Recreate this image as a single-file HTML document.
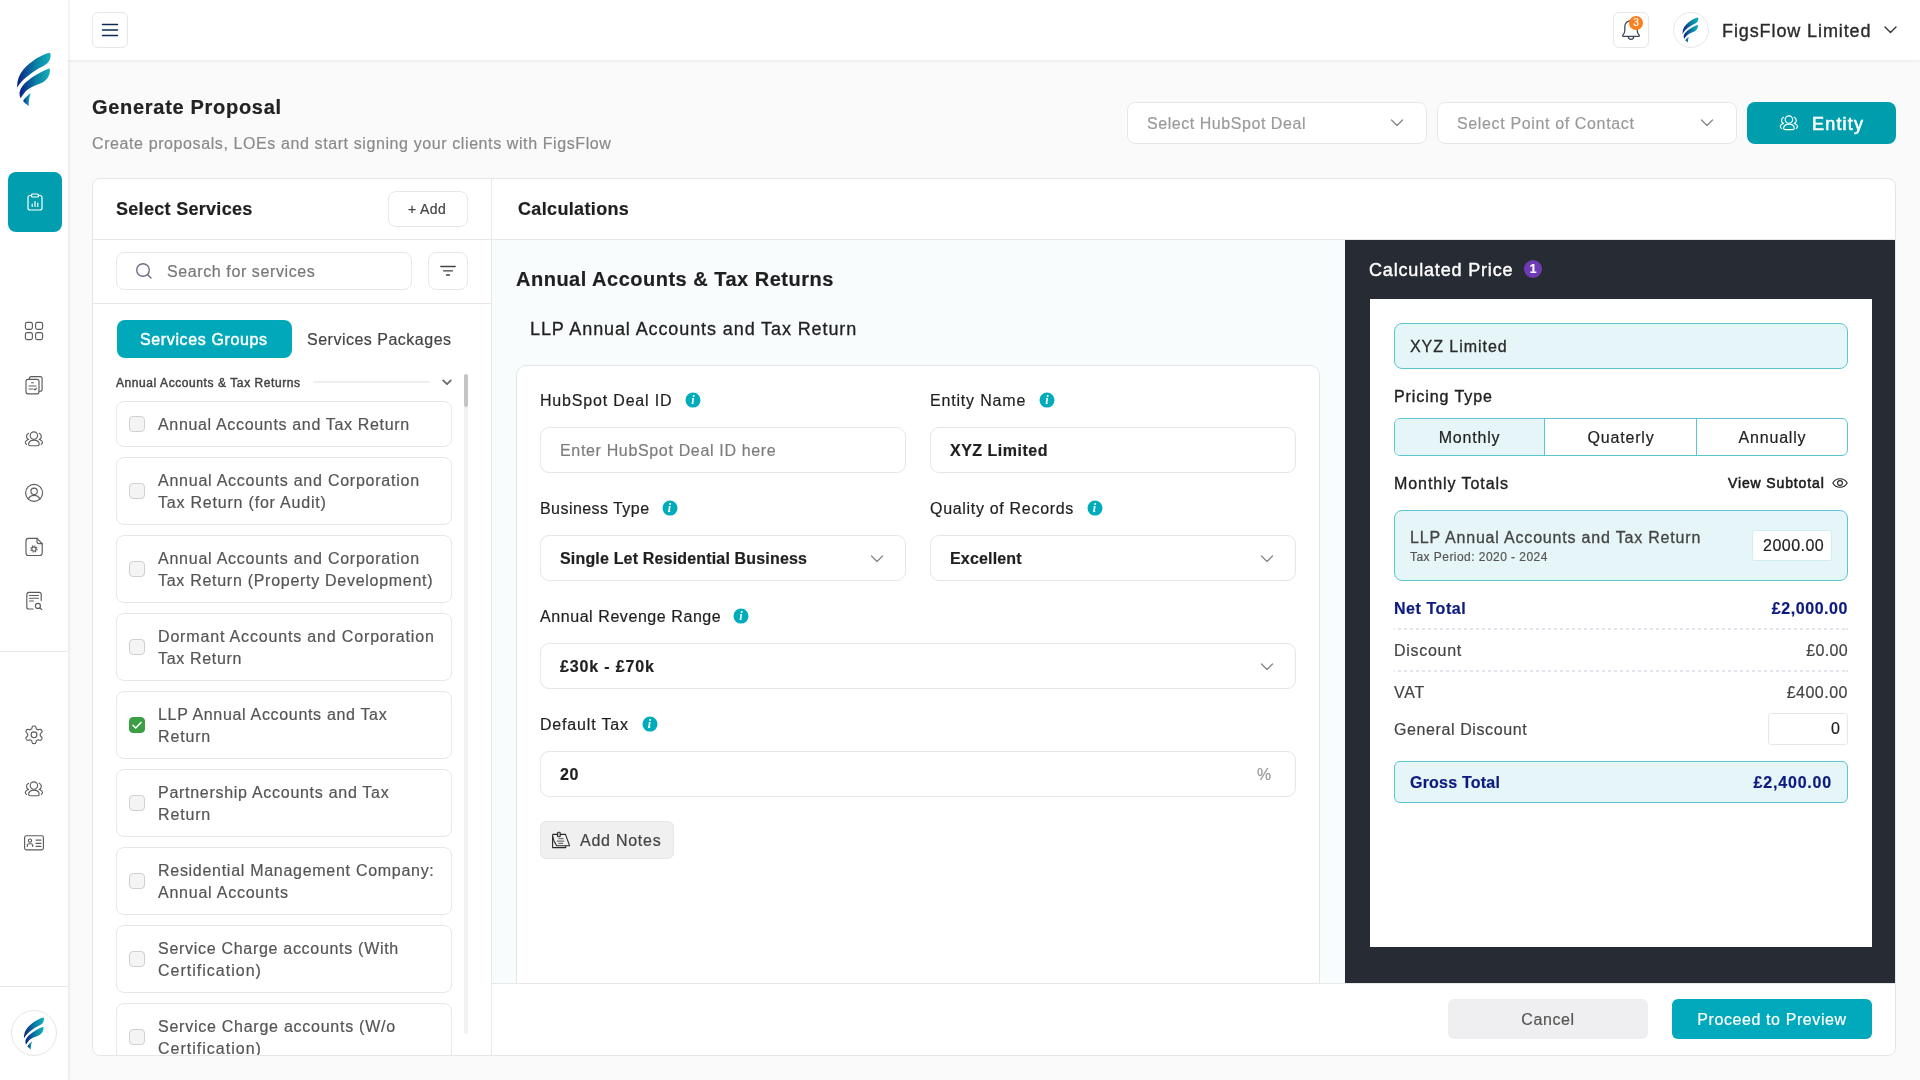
<!DOCTYPE html>
<html lang="en">
<head>
<meta charset="utf-8">
<title>Generate Proposal</title>
<style>
*{box-sizing:border-box;margin:0;padding:0}
html,body{width:1920px;height:1080px;overflow:hidden}
body{font-family:"Liberation Sans",sans-serif;font-size:16px;color:#222;background:#fafafa;position:relative;letter-spacing:.6px;-webkit-text-stroke:.2px}
.abs{position:absolute}
.t{position:absolute;white-space:nowrap;line-height:20px;margin-top:1px}
svg{display:block}
/* sidebar */
#side{position:absolute;left:0;top:0;width:68px;height:1080px;background:#fff;box-shadow:1px 0 3px rgba(0,0,0,.09);z-index:5}
.ico{position:absolute;left:22px;width:24px;height:24px}
.ico svg{width:24px;height:24px;fill:none;stroke:#5c5c5c;stroke-width:1.15;stroke-linecap:round;stroke-linejoin:round}
.sdiv{position:absolute;left:0;width:68px;height:1px;background:#e8e8e8}
/* topbar */
#top{position:absolute;left:68px;top:0;width:1852px;height:60px;background:#fff;box-shadow:0 1px 3px rgba(0,0,0,.08);z-index:4}
.sqbtn{position:absolute;width:36px;height:36px;border:1px solid #e7e7e8;border-radius:6px;background:#fff}
/* inputs */
.inp{position:absolute;border:1px solid #e7e7e8;border-radius:8px;background:#fff}
.chev{position:absolute;width:14px;height:8px}
.chev svg{width:14px;height:8px;fill:none;stroke:#8a8a8a;stroke-width:1.4;stroke-linecap:round;stroke-linejoin:round}
.info{position:absolute;width:15px;height:15px;border-radius:50%;background:#00abbb;transform:translate(.5px,-.4px);-webkit-text-stroke:0;color:#fff;font-family:"Liberation Serif",serif;font-style:italic;font-weight:700;font-size:12px;line-height:15px;text-align:center;letter-spacing:0}
/* card */
#card{position:absolute;left:92px;top:178px;width:1804px;height:878px;background:#fff;border:1px solid #e6e6e6;border-radius:8px;overflow:hidden}
.svc{position:absolute;left:116px;width:336px;border:1px solid #e7e7e8;border-radius:8px;background:#fff}
.svc .cb{position:absolute;left:12px;top:50%;margin-top:-8px;width:16px;height:16px;border:1px solid #d0d0d0;border-radius:4px;background:#f4f4f5}
.svc .lb{position:absolute;left:41px;top:50%;color:#555;line-height:22px;white-space:nowrap;letter-spacing:.75px;padding-top:1px}
#clip{position:absolute;left:0;top:0;width:1895px;height:1055px;overflow:hidden}
#clip,#top,#side,#hdr{will-change:transform}
.svc .cb.on{background:#3c9f46;border-color:#3c9f46}
.svc .cb svg{position:absolute;left:-1px;top:-1px;width:16px;height:16px;fill:none;stroke:#fff;stroke-width:1.500;stroke-linecap:round;stroke-linejoin:round}
.lab{color:#1f1f1f;letter-spacing:.82px}
.val{color:#1f1f1f;font-weight:700;letter-spacing:.17px}
.inp.f{border-radius:9px}
.tbox{position:absolute;background:#e6f6f8;border:1px solid #5cc5d2;border-radius:8px}
.med{color:#222;letter-spacing:.92px;-webkit-text-stroke:.35px #222}
.seg{text-align:center;color:#222;letter-spacing:.8px}
.navy{color:#0d1b7e;font-weight:700;letter-spacing:.55px}
.row{color:#444;letter-spacing:.72px}
.r{right:47px}
.dot{position:absolute;left:1394px;width:454px;height:2px;background:repeating-linear-gradient(90deg,#e3e5ec 0,#e3e5ec 3px,transparent 3px,transparent 6px);background-position:-2px 0}
</style>
</head>
<body>

<!-- SIDEBAR -->
<div id="side">
<svg style="position:absolute;left:0;top:0;width:0;height:0">
<defs>
<linearGradient id="lg" x1="0" y1="0" x2="1" y2="0"><stop offset="0" stop-color="#0a1f86"/><stop offset=".55" stop-color="#0a7fa3"/><stop offset="1" stop-color="#12b0bd"/></linearGradient>
<symbol id="logo" viewBox="16 52 36 55">
<path fill="url(#lg)" d="M49.9 52.8C50.8 54.5 50.8 56.4 50.2 58.2C49.3 61.2 47.6 63.6 45 65.1C41.2 67.4 36.6 69.4 32.7 72.2C26.5 76.6 20.5 81.6 17.1 87.8C17.1 84.2 17.5 80.6 18.8 77.2C21 71.6 24.8 67.4 29.5 63.6C33.2 60.6 37 57.8 41.1 56C44 54.6 46.8 53.4 49.9 52.8Z"/>
<path fill="url(#lg)" d="M49.6 68.3C50.2 70.8 49.9 73.4 48.9 75.5C47.6 78.6 45.3 81 42.4 82.6C38.9 84.5 34.9 85.4 31.4 87.2C28.6 88.6 26 90.6 24.3 93C23 94.6 21.7 96.4 20.7 98.2C19.7 96.2 19.3 93.9 19.7 91.7C20.5 87.8 23.2 84.7 26.2 82C29.5 79 33.3 76.4 37.2 74.2C41.1 71.9 45.3 69.9 49.6 68.3Z"/>
<path fill="url(#lg)" d="M30.8 93C29.2 97.3 28.4 101.7 28.8 106C26.7 104.6 24.7 103 23 101.1C25 98 27.7 95.1 30.8 93Z"/>
</symbol>
</defs>
</svg>
<svg class="abs" style="left:16px;top:52px;width:36px;height:55px"><use href="#logo"/></svg>
<div class="abs" style="left:8px;top:172px;width:54px;height:60px;border-radius:8px;background:#009eae"></div>
<svg class="abs" style="left:25px;top:192px;width:20px;height:20px;fill:none;stroke:#fff;stroke-width:1.2;stroke-linecap:round;stroke-linejoin:round" viewBox="0 0 20 20"><path d="M6.5 3.5H5a2 2 0 0 0-2 2V16a2 2 0 0 0 2 2h10a2 2 0 0 0 2-2V5.500a2 2 0 0 0-2-2h-1.500"/><rect x="6.500" y="2" width="7" height="3" rx="1"/><path d="M7.200 14.500V12M10 14.500V9.500M12.800 14.500V11"/></svg>

<div class="ico" style="top:319px"><svg viewBox="0 0 24 24"><rect x="3.400" y="3.400" width="7" height="7" rx="1.800"/><rect x="13.600" y="3.400" width="7" height="7" rx="1.800"/><rect x="3.400" y="13.600" width="7" height="7" rx="1.800"/><rect x="13.600" y="13.600" width="7" height="7" rx="1.800"/></svg></div>
<div class="ico" style="top:373px"><svg viewBox="0 0 24 24"><path d="M7.300 6.300V5.600a2 2 0 0 1 2-2h8.800a2 2 0 0 1 2 2v10.600a2 2 0 0 1-2 2H17"/><rect x="4" y="6.300" width="13" height="14.500" rx="2"/><path d="M9.500 9.700h2M7 13h7M7 16h3.500M12 16l.900.900 1.700-1.700"/></svg></div>
<div class="ico" style="top:427px"><svg viewBox="0 0 24 24"><circle cx="11.900" cy="8.550" r="3.700"/><path d="M6.600 17.300c0-2.700 2.200-4.200 5.300-4.200s5.300 1.500 5.300 4.200c0 .900-.600 1.400-1.500 1.400H8.100c-.900 0-1.500-.500-1.500-1.400Z"/><path d="M6.600 6.300C5.200 7 4.500 8.100 4.500 9.400s.700 2.400 2.100 3.100M5.800 12.800C4.200 13.500 3.300 14.500 3.300 15.600c0 .800.400 1.400 1.200 1.800M17.200 6.300c1.400.700 2.100 1.800 2.100 3.100s-.700 2.400-2.100 3.100M18 12.800c1.600.700 2.500 1.700 2.500 2.800 0 .800-.400 1.400-1.200 1.800"/></svg></div>
<div class="ico" style="top:481px"><svg viewBox="0 0 24 24"><circle cx="12.100" cy="11.800" r="8.500"/><circle cx="12.100" cy="10.300" r="3.200"/><path d="M6.300 18c1-2.300 3.200-3.700 5.800-3.700s4.800 1.400 5.800 3.700"/></svg></div>
<div class="ico" style="top:535px"><svg viewBox="0 0 24 24"><path d="M15 3.400H6.500A2.500 2.500 0 0 0 4 5.900V18a2.500 2.500 0 0 0 2.500 2.500h11.200a2.500 2.500 0 0 0 2.500-2.500V8.600Z"/><path d="M15 3.400v3.200a2 2 0 0 0 2 2h3.200"/><circle cx="11.900" cy="13.900" r="2.100"/><circle cx="11.900" cy="13.900" r="3.100" stroke-width="1.300" stroke-dasharray="1.100 1.335" stroke-linecap="butt"/></svg></div>
<div class="ico" style="top:589px"><svg viewBox="0 0 24 24"><path d="M19.200 11.500V5.400a2 2 0 0 0-2-2H6.800a2 2 0 0 0-2 2V18a2 2 0 0 0 2 2H11"/><path d="M7.500 6.500h9M7.500 9.200h9M7.500 12h4"/><circle cx="15.900" cy="16.900" r="2.500"/><path d="M17.800 18.800l2 1.800"/></svg></div>
<div class="sdiv" style="top:651px"></div>
<div class="ico" style="top:723px"><svg viewBox="0 0 24 24"><circle cx="12" cy="11.800" r="2.900"/><path d="M12.00 3.00 L12.46 3.01 L12.92 3.05 L13.36 3.18 L13.70 3.81 L13.95 4.51 L14.14 5.21 L14.28 5.85 L14.56 6.04 L14.86 6.19 L15.15 6.34 L15.43 6.52 L15.70 6.70 L16.01 6.85 L16.64 6.65 L17.34 6.46 L18.07 6.33 L18.78 6.31 L19.12 6.63 L19.38 7.01 L19.62 7.40 L19.84 7.80 L20.04 8.22 L20.15 8.67 L19.77 9.28 L19.29 9.85 L18.78 10.36 L18.30 10.80 L18.27 11.14 L18.29 11.47 L18.30 11.80 L18.29 12.13 L18.27 12.46 L18.30 12.80 L18.78 13.24 L19.29 13.75 L19.77 14.32 L20.15 14.93 L20.04 15.38 L19.84 15.80 L19.62 16.20 L19.38 16.59 L19.12 16.97 L18.78 17.29 L18.07 17.27 L17.34 17.14 L16.64 16.95 L16.01 16.75 L15.70 16.90 L15.43 17.08 L15.15 17.26 L14.86 17.41 L14.56 17.56 L14.28 17.75 L14.14 18.39 L13.95 19.09 L13.70 19.79 L13.36 20.42 L12.92 20.55 L12.46 20.59 L12.00 20.60 L11.54 20.59 L11.08 20.55 L10.64 20.42 L10.30 19.79 L10.05 19.09 L9.86 18.39 L9.72 17.75 L9.44 17.56 L9.14 17.41 L8.85 17.26 L8.57 17.08 L8.30 16.90 L7.99 16.75 L7.36 16.95 L6.66 17.14 L5.93 17.27 L5.22 17.29 L4.88 16.97 L4.62 16.59 L4.38 16.20 L4.16 15.80 L3.96 15.38 L3.85 14.93 L4.23 14.32 L4.71 13.75 L5.22 13.24 L5.70 12.80 L5.73 12.46 L5.71 12.13 L5.70 11.80 L5.71 11.47 L5.73 11.14 L5.70 10.80 L5.22 10.36 L4.71 9.85 L4.23 9.28 L3.85 8.67 L3.96 8.22 L4.16 7.80 L4.38 7.40 L4.62 7.01 L4.88 6.63 L5.22 6.31 L5.93 6.33 L6.66 6.46 L7.36 6.65 L7.99 6.85 L8.30 6.70 L8.57 6.52 L8.85 6.34 L9.14 6.19 L9.44 6.04 L9.72 5.85 L9.86 5.21 L10.05 4.51 L10.30 3.81 L10.64 3.18 L11.08 3.05 L11.54 3.01Z"/></svg></div>
<div class="ico" style="top:777px"><svg viewBox="0 0 24 24"><circle cx="11.900" cy="8.550" r="3.700"/><path d="M6.600 17.300c0-2.700 2.200-4.200 5.300-4.200s5.300 1.500 5.300 4.200c0 .900-.600 1.400-1.500 1.400H8.100c-.900 0-1.500-.500-1.500-1.400Z"/><path d="M6.600 6.300C5.200 7 4.500 8.100 4.500 9.400s.700 2.400 2.100 3.100M5.800 12.800C4.200 13.500 3.300 14.500 3.300 15.600c0 .800.400 1.400 1.200 1.800M17.200 6.300c1.400.700 2.100 1.800 2.100 3.100s-.700 2.400-2.100 3.100M18 12.800c1.600.700 2.500 1.700 2.500 2.800 0 .800-.400 1.400-1.200 1.800"/></svg></div>
<div class="ico" style="top:831px"><svg viewBox="0 0 24 24"><rect x="2.600" y="4.700" width="18.800" height="14.200" rx="1.800"/><circle cx="8" cy="9.600" r="1.600"/><path d="M5.300 15.400v-.700a2 2 0 0 1 2-2h1.400a2 2 0 0 1 2 2v.700M14 9.100h5M14 12.400h5M14 15.300h5"/></svg></div>
<div class="sdiv" style="top:986px"></div>
<div class="abs" style="left:11px;top:1010px;width:46px;height:46px;border-radius:50%;border:1px solid #e6e6e6;background:#fff"></div>
<svg class="abs" style="left:23px;top:1017px;width:22px;height:33px"><use href="#logo"/></svg>
</div>

<!-- TOPBAR -->
<div id="top">
<div class="sqbtn" style="left:24px;top:12px"></div>
<svg class="abs" style="left:33px;top:21px;width:18px;height:18px;fill:none;stroke:#0b2a55;stroke-width:1.5;stroke-linecap:round" viewBox="0 0 18 18"><path d="M1.500 3.500h15M1.500 9h15M1.500 14.500h15"/></svg>
<div class="sqbtn" style="left:1545px;top:12px"></div>
<svg class="abs" style="left:1552px;top:19px;width:22px;height:24px;fill:none;stroke:#3d4556;stroke-width:1.25;stroke-linecap:round;stroke-linejoin:round" viewBox="0 0 22 24"><path d="M3.3 17.3c-.7 0-.9-.8-.4-1.3 1.400-1.300 1.900-2.400 1.900-4.400V7.7a6.2 6.2 0 0 1 12.4 0v3.9c0 2 .5 3.1 1.900 4.400.5.5.3 1.300-.4 1.300Z"/><path d="M8.2 17.6c.3 1.800 1.400 2.700 2.800 2.700s2.500-.9 2.800-2.700"/></svg>
<div class="abs" style="left:1561px;top:16px;width:14px;height:14px;border-radius:50%;background:#ff7e1e;color:#fff;font-size:10px;line-height:14px;text-align:center;letter-spacing:0">3</div>
<div class="abs" style="left:1605px;top:12px;width:36px;height:36px;border-radius:50%;border:1px solid #e7e7e8;background:#fff"></div>
<svg class="abs" style="left:1614px;top:17px;width:17px;height:26px"><use href="#logo"/></svg>
<div class="t" style="left:1654px;top:18px;font-size:18px;line-height:24px;color:#2b2b2b;letter-spacing:.9px;-webkit-text-stroke:.35px #2b2b2b">FigsFlow Limited</div>
<svg class="abs" style="left:1816px;top:26px;width:13px;height:8px;fill:none;stroke:#333;stroke-width:1.4;stroke-linecap:round;stroke-linejoin:round" viewBox="0 0 13 8"><path d="M1 1l5.500 5.500L12 1"/></svg>
</div>

<!-- PAGE HEADER -->
<div id="hdr">
<div class="t" style="left:92px;top:94px;font-size:20px;font-weight:700;line-height:24px;color:#222;letter-spacing:.7px">Generate Proposal</div>
<div class="t" style="left:92px;top:133px;color:#8a8a8a;letter-spacing:.6px">Create proposals, LOEs and start signing your clients with FigsFlow</div>
<div class="inp" style="left:1127px;top:102px;width:300px;height:42px"></div>
<div class="t" style="left:1147px;top:113px;color:#9a9a9a;letter-spacing:.55px">Select HubSpot Deal</div>
<div class="chev" style="left:1390px;top:119px"><svg viewBox="0 0 14 8"><path d="M1.500 1l5.500 5.500L12.500 1"/></svg></div>
<div class="inp" style="left:1437px;top:102px;width:300px;height:42px"></div>
<div class="t" style="left:1457px;top:113px;color:#9a9a9a;letter-spacing:.64px">Select Point of Contact</div>
<div class="chev" style="left:1700px;top:119px"><svg viewBox="0 0 14 8"><path d="M1.500 1l5.500 5.500L12.500 1"/></svg></div>
<div class="abs" style="left:1747px;top:102px;width:149px;height:42px;border-radius:8px;background:#009eac"></div>
<svg class="abs" style="left:1777px;top:111px;width:24px;height:24px;fill:none;stroke:#fff;stroke-width:1.15;stroke-linecap:round;stroke-linejoin:round" viewBox="0 0 24 24"><circle cx="11.900" cy="8.550" r="3.700"/><path d="M6.600 17.300c0-2.700 2.200-4.200 5.300-4.200s5.300 1.500 5.300 4.200c0 .900-.600 1.400-1.500 1.400H8.100c-.900 0-1.500-.500-1.500-1.400Z"/><path d="M6.600 6.300C5.200 7 4.500 8.100 4.500 9.400s.700 2.400 2.100 3.100M5.800 12.800C4.200 13.500 3.300 14.500 3.300 15.600c0 .800.400 1.400 1.200 1.800M17.200 6.300c1.400.700 2.100 1.800 2.100 3.100s-.700 2.400-2.100 3.100M18 12.800c1.600.700 2.500 1.700 2.500 2.800 0 .800-.400 1.400-1.200 1.800"/></svg>
<div class="t" style="left:1812px;top:111px;font-size:18px;line-height:24px;color:#fff;letter-spacing:1.2px;-webkit-text-stroke:.55px #fff">Entity</div>
</div>

<!-- CARD -->
<div id="card"></div>
<div id="clip">
<!-- left panel -->
<div class="abs" style="left:491px;top:179px;width:1px;height:876px;background:#e8e8e8"></div>
<div class="abs" style="left:93px;top:239px;width:1802px;height:1px;background:#e8e8e8"></div>
<div class="abs" style="left:93px;top:303px;width:398px;height:1px;background:#e8e8e8"></div>
<div class="t" style="left:116px;top:196px;font-size:18px;font-weight:700;line-height:24px;color:#1f1f1f;letter-spacing:.3px">Select Services</div>
<div class="inp" style="left:388px;top:191px;width:80px;height:36px"></div>
<div class="t" style="left:408px;top:198px;font-size:14px;color:#444;letter-spacing:.4px">+ Add</div>
<div class="inp" style="left:116px;top:252px;width:296px;height:38px"></div>
<svg class="abs" style="left:135px;top:262px;width:18px;height:18px;fill:none;stroke:#6b7085;stroke-width:1.4;stroke-linecap:round" viewBox="0 0 18 18"><circle cx="8" cy="8" r="6.300"/><path d="M12.700 12.700l3.300 3.300"/></svg>
<div class="t" style="left:167px;top:261px;color:#777;letter-spacing:.6px">Search for services</div>
<div class="inp" style="left:428px;top:252px;width:40px;height:38px"></div>
<svg class="abs" style="left:440px;top:265px;width:16px;height:12px;fill:none;stroke:#444;stroke-width:1.300;stroke-linecap:round" viewBox="0 0 16 12"><path d="M.800 1.500h14.400M3.500 5.800h9M6.500 10h3"/></svg>
<div class="abs" style="left:117px;top:320px;width:175px;height:38px;border-radius:8px;background:#00a8ba"></div>
<div class="t" style="left:140px;top:329px;color:#fff;letter-spacing:.62px;-webkit-text-stroke:.45px #fff">Services Groups</div>
<div class="t" style="left:307px;top:329px;color:#444;letter-spacing:.5px">Services Packages</div>
<div class="t" style="left:116px;top:372px;font-size:12px;color:#444;letter-spacing:.58px;-webkit-text-stroke:.45px #444">Annual Accounts &amp; Tax Returns</div>
<div class="abs" style="left:313px;top:381px;width:117px;height:2px;background:#efefef"></div>
<svg class="abs" style="left:442px;top:379px;width:10px;height:7px;fill:none;stroke:#6a6a6a;stroke-width:1.8;stroke-linecap:round;stroke-linejoin:round" viewBox="0 0 10 7"><path d="M1.2 1.4l3.8 3.8 3.8-3.800"/></svg>
<div class="abs" style="left:464px;top:374px;width:4px;height:660px;background:#f1f1f1;border-radius:2px"></div>
<div class="abs" style="left:464px;top:374px;width:4px;height:33px;background:#c4c4c4;border-radius:2px"></div>
<div class="svc" style="top:401px;height:46px"><div class="cb"></div><div class="lb" style="margin-top:-11px"><span style="letter-spacing:0.665px">Annual Accounts and Tax Return</span></div></div>
<div class="svc" style="top:457px;height:68px"><div class="cb"></div><div class="lb" style="margin-top:-22px"><span style="letter-spacing:0.755px">Annual Accounts and Corporation</span><br><span style="letter-spacing:0.795px">Tax Return (for Audit)</span></div></div>
<div class="svc" style="top:535px;height:68px"><div class="cb"></div><div class="lb" style="margin-top:-22px"><span style="letter-spacing:0.755px">Annual Accounts and Corporation</span><br><span style="letter-spacing:0.715px">Tax Return (Property Development)</span></div></div>
<div class="svc" style="top:613px;height:68px"><div class="cb"></div><div class="lb" style="margin-top:-22px"><span style="letter-spacing:0.835px">Dormant Accounts and Corporation</span><br><span style="letter-spacing:0.675px">Tax Return</span></div></div>
<div class="svc" style="top:691px;height:68px"><div class="cb on"><svg viewBox="0 0 16 16"><path d="M4 8.300l2.700 2.700L12 5.500"/></svg></div><div class="lb" style="margin-top:-22px"><span style="letter-spacing:0.675px">LLP Annual Accounts and Tax</span><br><span style="letter-spacing:0.845px">Return</span></div></div>
<div class="svc" style="top:769px;height:68px"><div class="cb"></div><div class="lb" style="margin-top:-22px"><span style="letter-spacing:0.715px">Partnership Accounts and Tax</span><br><span style="letter-spacing:0.845px">Return</span></div></div>
<div class="svc" style="top:847px;height:68px"><div class="cb"></div><div class="lb" style="margin-top:-22px"><span style="letter-spacing:0.715px">Residential Management Company:</span><br><span style="letter-spacing:0.765px">Annual Accounts</span></div></div>
<div class="svc" style="top:925px;height:68px"><div class="cb"></div><div class="lb" style="margin-top:-22px"><span style="letter-spacing:0.705px">Service Charge accounts (With</span><br><span style="letter-spacing:1.005px">Certification)</span></div></div>
<div class="svc" style="top:1003px;height:68px"><div class="cb"></div><div class="lb" style="margin-top:-22px"><span style="letter-spacing:0.745px">Service Charge accounts (W/o</span><br><span style="letter-spacing:1.005px">Certification)</span></div></div>

<!-- /left panel -->
<!-- middle panel -->
<div class="abs" style="left:492px;top:240px;width:853px;height:743px;background:#f8fcfd"></div>
<div class="t" style="left:518px;top:196px;font-size:18px;font-weight:700;line-height:24px;color:#1f1f1f;letter-spacing:.35px">Calculations</div>
<div class="t" style="left:516px;top:265px;font-size:20px;font-weight:700;line-height:26px;color:#1f1f1f;letter-spacing:.5px">Annual Accounts &amp; Tax Returns</div>
<div class="t" style="left:530px;top:316px;font-size:18px;line-height:24px;color:#222;letter-spacing:.9px;-webkit-text-stroke:.3px #222">LLP Annual Accounts and Tax Return</div>
<div class="abs" style="left:516px;top:365px;width:804px;height:640px;background:#fff;border:1px solid #e6e6e6;border-radius:10px"></div>

<div class="t lab" style="left:540px;top:390px">HubSpot Deal ID</div><div class="info" style="left:685.0px;top:393.0px">i</div>
<div class="inp f" style="left:540px;top:427px;width:366px;height:46px"></div>
<div class="t" style="left:560px;top:440px;color:#7d7d7d;letter-spacing:.66px">Enter HubSpot Deal ID here</div>
<div class="t lab" style="left:930px;top:390px">Entity Name</div><div class="info" style="left:1039.0px;top:393.0px">i</div>
<div class="inp f" style="left:930px;top:427px;width:366px;height:46px"></div>
<div class="t val" style="left:950px;top:440px;letter-spacing:.5px">XYZ Limited</div>

<div class="t lab" style="left:540px;top:498px;letter-spacing:.44px">Business Type</div><div class="info" style="left:661.5px;top:501.0px">i</div>
<div class="inp f" style="left:540px;top:535px;width:366px;height:46px"></div>
<div class="t val" style="left:560px;top:548px">Single Let Residential Business</div><div class="chev" style="left:870px;top:555px"><svg viewBox="0 0 14 8"><path d="M1.500 1l5.500 5.500L12.500 1"/></svg></div>
<div class="t lab" style="left:930px;top:498px;letter-spacing:.69px">Quality of Records</div><div class="info" style="left:1086.5px;top:501.0px">i</div>
<div class="inp f" style="left:930px;top:535px;width:366px;height:46px"></div>
<div class="t val" style="left:950px;top:548px">Excellent</div><div class="chev" style="left:1260px;top:555px"><svg viewBox="0 0 14 8"><path d="M1.500 1l5.500 5.500L12.500 1"/></svg></div>

<div class="t lab" style="left:540px;top:606px;letter-spacing:.57px">Annual Revenge Range</div><div class="info" style="left:733.0px;top:609.0px">i</div>
<div class="inp f" style="left:540px;top:643px;width:756px;height:46px"></div>
<div class="t val" style="left:560px;top:656px;letter-spacing:.84px">£30k - £70k</div><div class="chev" style="left:1260px;top:663px"><svg viewBox="0 0 14 8"><path d="M1.500 1l5.500 5.500L12.500 1"/></svg></div>

<div class="t lab" style="left:540px;top:714px">Default Tax</div><div class="info" style="left:641.5px;top:717.0px">i</div>
<div class="inp f" style="left:540px;top:751px;width:756px;height:46px"></div>
<div class="t val" style="left:560px;top:764px;letter-spacing:.7px">20</div>
<div class="t" style="left:1257px;top:764px;color:#9a9a9a;letter-spacing:0">%</div>

<div class="abs" style="left:540px;top:821px;width:134px;height:38px;border-radius:6px;background:#f0f0f1;border:1px solid #e7e7e8"></div>
<svg class="abs" style="left:552px;top:831px;width:18px;height:18px;fill:none;stroke:#2b2b2b;stroke-width:1.100;stroke-linejoin:round" viewBox="0 0 18 18"><path d="M.600 3.400V16.600H13.700V14.800"/><path d="M.600 3.400H13.500L17.600 14.700H4.700C2.600 12.200 1.200 8.500.600 5"/><rect x="5.500" y="1.300" width="2.700" height="4.400" rx=".800" fill="#cfcfcf"/><path d="M6.600 7.700h5M4.800 10.100h7.400M6.200 12.300h5" stroke="#555" stroke-width="1"/></svg>
<div class="t" style="left:580px;top:830px;color:#444;letter-spacing:.75px">Add Notes</div>

<!-- right panel -->
<div class="abs" style="left:1345px;top:240px;width:550px;height:743px;background:#272b33"></div>
<div class="t" style="left:1369px;top:257px;font-size:18px;line-height:24px;color:#fff;letter-spacing:.83px;-webkit-text-stroke:.4px #fff">Calculated Price</div>
<div class="abs" style="left:1524px;top:260px;width:18px;height:18px;border-radius:50%;background:#6f3bb5;color:#fff;font-size:12px;line-height:18px;text-align:center;letter-spacing:0;font-weight:700">1</div>
<div class="abs" style="left:1370px;top:299px;width:502px;height:648px;background:#fff"></div>
<div class="tbox" style="left:1394px;top:323px;width:454px;height:46px"></div>
<div class="t" style="left:1410px;top:336px;color:#2a2a2a;letter-spacing:.95px;-webkit-text-stroke:.3px #2a2a2a">XYZ Limited</div>
<div class="t med" style="left:1394px;top:386px">Pricing Type</div>
<div class="tbox" style="left:1394px;top:418px;width:454px;height:38px;background:#fff;border-radius:6px"></div>
<div class="abs" style="left:1395px;top:419px;width:150px;height:36px;background:#e6f6f8;border-radius:5px 0 0 5px"></div>
<div class="abs" style="left:1544px;top:419px;width:1px;height:36px;background:#5cc5d2"></div>
<div class="abs" style="left:1696px;top:419px;width:1px;height:36px;background:#5cc5d2"></div>
<div class="t seg" style="left:1394px;top:427px;width:151px">Monthly</div>
<div class="t seg" style="left:1545px;top:427px;width:152px">Quaterly</div>
<div class="t seg" style="left:1697px;top:427px;width:151px">Annually</div>
<div class="t med" style="left:1394px;top:473px">Monthly Totals</div>
<div class="t" style="left:1728px;top:472px;font-size:14px;color:#1c1c1c;letter-spacing:.87px;-webkit-text-stroke:.55px #1c1c1c">View Subtotal</div>
<svg class="abs" style="left:1832px;top:477px;width:16px;height:12px;fill:none;stroke:#222;stroke-width:1.1;stroke-linecap:round;stroke-linejoin:round" viewBox="0 0 16 12"><path d="M.8 6C2.400 3.200 5 1.700 8 1.700s5.600 1.500 7.200 4.300C13.600 8.800 11 10.300 8 10.300S2.400 8.800.8 6Z"/><circle cx="8" cy="6" r="2.400"/></svg>
<div class="tbox" style="left:1394px;top:510px;width:454px;height:71px"></div>
<div class="t" style="left:1410px;top:527px;color:#444;letter-spacing:.81px;-webkit-text-stroke:.3px #444">LLP Annual Accounts and Tax Return</div>
<div class="t" style="left:1410px;top:546px;font-size:12px;color:#555;letter-spacing:.45px">Tax Period: 2020 - 2024</div>
<div class="abs" style="left:1752px;top:530px;width:80px;height:31px;background:#fff;border:1px solid #cfeef2;border-radius:3px"></div>
<div class="t" style="left:1763px;top:535px;color:#222;letter-spacing:.48px">2000.00</div>
<div class="t navy" style="left:1394px;top:598px">Net Total</div>
<div class="t navy r" style="top:598px">£2,000.00</div>
<div class="dot" style="top:628px"></div>
<div class="t row" style="left:1394px;top:640px">Discount</div>
<div class="t row r" style="top:640px;letter-spacing:.35px">£0.00</div>
<div class="dot" style="top:670px"></div>
<div class="t row" style="left:1394px;top:682px">VAT</div>
<div class="t row r" style="top:682px;letter-spacing:.5px">£400.00</div>
<div class="t row" style="left:1394px;top:719px;letter-spacing:.6px">General Discount</div>
<div class="abs" style="left:1768px;top:713px;width:80px;height:32px;background:#fff;border:1px solid #e7e7e8;border-radius:3px"></div>
<div class="t" style="left:1768px;top:718px;width:72px;text-align:right;color:#222;letter-spacing:0">0</div>
<div class="tbox" style="left:1394px;top:761px;width:454px;height:42px;border-radius:6px"></div>
<div class="t navy" style="left:1410px;top:772px;letter-spacing:.22px">Gross Total</div>
<div class="t navy" style="right:63px;top:772px;letter-spacing:.8px">£2,400.00</div>
<!-- /right panel -->
<!-- footer -->
<div class="abs" style="left:492px;top:983px;width:1403px;height:72px;background:#fff;border-top:1px solid #e8e8e8;border-radius:0 0 7px 0"></div>
<div class="abs" style="left:1448px;top:999px;width:200px;height:40px;border-radius:6px;background:#efeff1"></div>
<div class="t" style="left:1448px;top:1009px;width:200px;text-align:center;color:#555;letter-spacing:.6px">Cancel</div>
<div class="abs" style="left:1672px;top:999px;width:200px;height:40px;border-radius:6px;background:#00a9bb"></div>
<div class="t" style="left:1672px;top:1009px;width:200px;text-align:center;color:#fff;letter-spacing:.6px">Proceed to Preview</div>
<!-- /middle panel -->

</div>

</body>
</html>
